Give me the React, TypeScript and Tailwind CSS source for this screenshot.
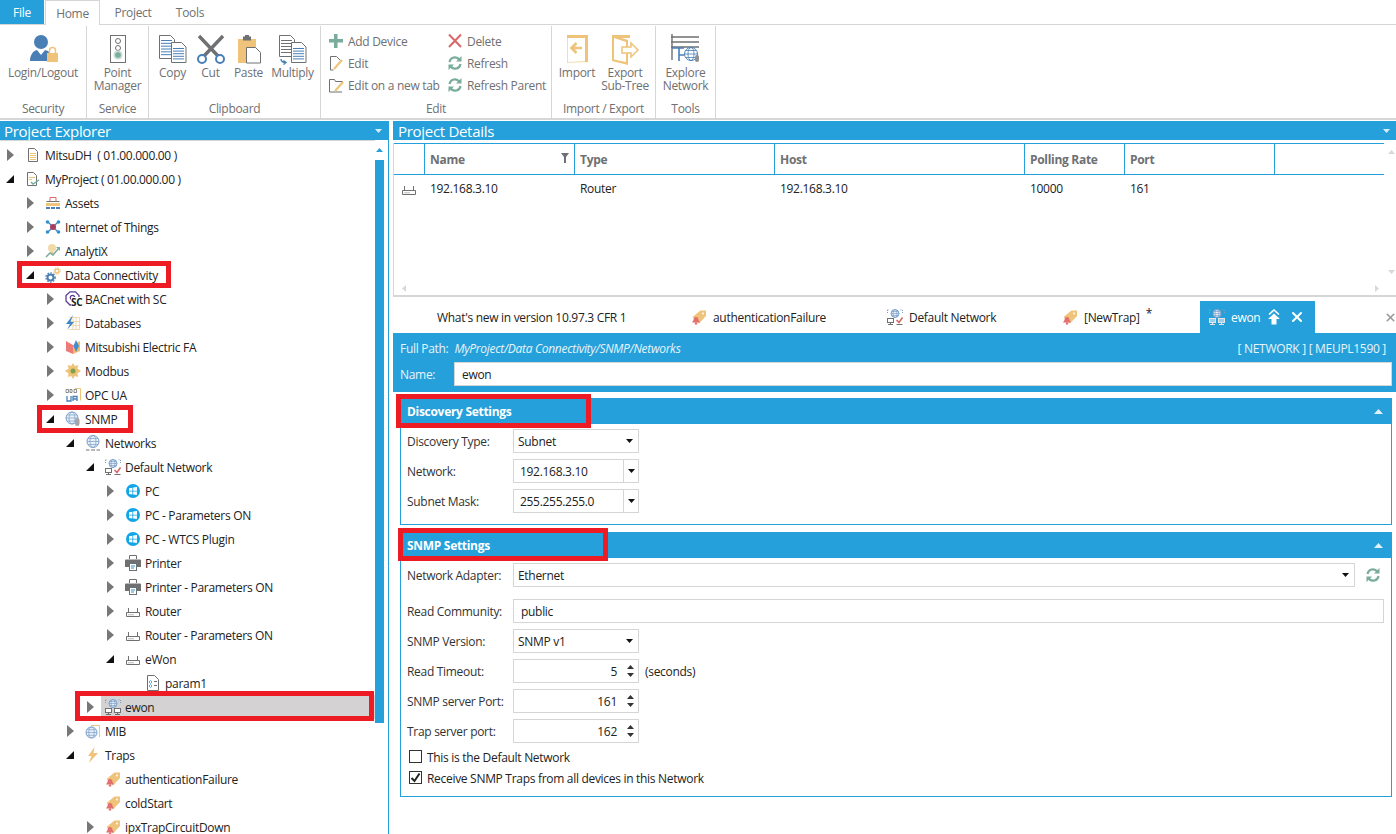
import type { ReactNode } from "react"
import { X } from "lucide-react"

const ICON_BLUE = "#4a7fb5"
const ICON_ORANGE = "#efc379"
const ICON_GRAY = "#6f7072"
const ICON_GREEN = "#79ac9b"
const ICON_RED = "#d9686a"

function Ico({ s = 16, v = 16, children }: { s?: number; v?: number; children: ReactNode }) {
  return (
    <svg width={s} height={s} viewBox={`0 0 ${v} ${v}`} fill="none" className="shrink-0">
      {children}
    </svg>
  )
}

// ribbon icons, 32 box
function UserLock() {
  return (
    <Ico s={32} v={32}>
      <circle cx="14" cy="9" r="7" fill={ICON_BLUE} />
      <path d="M3 28c0-6 3-10 7-11l4 5 4-5c2 .5 3 1 4 2v9H3z" fill={ICON_BLUE} />
      <rect x="20" y="20" width="11" height="9" fill={ICON_ORANGE} />
      <path d="M22.500 20v-2.500a3 3 0 0 1 6 0V20" stroke={ICON_ORANGE} strokeWidth="1.500" />
    </Ico>
  )
}
function TrafficLight() {
  return (
    <Ico s={32} v={32}>
      <rect x="8.500" y="2.500" width="15" height="27" stroke={ICON_GRAY} />
      <circle cx="16" cy="8" r="2.500" stroke={ICON_GRAY} />
      <circle cx="16" cy="15" r="2.500" stroke={ICON_GRAY} />
      <circle cx="16" cy="22" r="4.500" fill="#c5ddd4" />
      <circle cx="16" cy="22" r="2.800" fill={ICON_GREEN} />
    </Ico>
  )
}
function DocLines({ x, y, w, h, c, n }: { x: number; y: number; w: number; h: number; c: string; n: number }) {
  return (
    <>
      {Array.from({ length: n }).map((_, i) => (
        <line key={i} x1={x} x2={x + w} y1={y + (i * h) / n + 0.5} y2={y + (i * h) / n + 0.5} stroke={c} />
      ))}
    </>
  )
}
function CopyIcon() {
  return (
    <Ico s={32} v={32}>
      <path d="M2.500 2.500h11l4 4v19h-15z" stroke={ICON_GRAY} fill="white" />
      <DocLines x={4} y={7} w={11} h={17} c={ICON_BLUE} n={6} />
      <path d="M14.500 9.500h10l4.500 4.500v15.500H14.500z" stroke={ICON_GRAY} fill="white" />
      <DocLines x={16} y={15} w={11} h={13} c={ICON_BLUE} n={5} />
    </Ico>
  )
}
function MultiplyIcon() {
  return (
    <Ico s={32} v={32}>
      <path d="M2.500 2.500h11l4 4v17h-15z" stroke={ICON_GRAY} fill="white" />
      <DocLines x={4} y={7} w={11} h={15} c={ICON_GRAY} n={5} />
      <path d="M14.500 9.500h10l4.500 4.500v15.500H14.500z" stroke={ICON_GRAY} fill="white" />
      <DocLines x={16} y={15} w={11} h={13} c={ICON_BLUE} n={5} />
      <path d="M4 26c0 3 2 3.500 5 3.500M6.500 27.500 9 29.500l-2.500 2" stroke={ICON_BLUE} strokeWidth="1.400" />
    </Ico>
  )
}
function Scissors32() {
  return (
    <Ico s={32} v={32}>
      <path d="M4 3l19 20M28 3 9 23" stroke={ICON_GRAY} strokeWidth="3.400" />
      <circle cx="7" cy="26" r="4" stroke={ICON_BLUE} strokeWidth="2" fill="white" />
      <circle cx="25" cy="26" r="4" stroke={ICON_BLUE} strokeWidth="2" fill="white" />
    </Ico>
  )
}
function PasteIcon() {
  return (
    <Ico s={32} v={32}>
      <rect x="5" y="6" width="18" height="24" fill={ICON_ORANGE} />
      <rect x="10" y="3.500" width="8" height="4" fill={ICON_GRAY} />
      <rect x="12" y="2" width="4" height="2" fill={ICON_GRAY} />
      <path d="M13.500 14.500h9l5 5v10.500h-14z" stroke={ICON_GRAY} fill="white" />
    </Ico>
  )
}
function ImportIcon() {
  return (
    <Ico s={32} v={32}>
      <path d="M6 2h21v27l-21 1z" fill="#f6dcae" />
      <path d="M7 3h17v25L7 29z" fill="white" />
      <path d="M24 2h3v27h-3z" fill={ICON_ORANGE} />
      <path d="M6 2h21v3H6z" fill={ICON_ORANGE} />
      <path d="M21 15h-10M15.500 10 10.500 15l5 5" stroke={ICON_ORANGE} strokeWidth="2.600" />
    </Ico>
  )
}
function ExportIcon() {
  return (
    <Ico s={32} v={32}>
      <path d="M3 2h18v3H3z" fill={ICON_ORANGE} />
      <path d="M3 2l16 5v25L3 28z" fill={ICON_ORANGE} />
      <path d="M5 5l12 4v20L5 26.500z" fill="white" />
      <path d="M13 14h9v-4l7 7-7 7v-4h-9z" fill="white" stroke={ICON_ORANGE} strokeWidth="1.500" />
    </Ico>
  )
}
function ExploreIcon() {
  return (
    <Ico s={32} v={32}>
      <path d="M1 4h28M1 9h28M1 14h28" stroke={ICON_GRAY} strokeWidth="1.400" />
      <path d="M2 1v26" stroke={ICON_GRAY} strokeWidth="1.400" />
      <path d="M2 15h12M9 15v13M9 22h5" stroke={ICON_BLUE} strokeWidth="1.600" />
      <circle cx="21" cy="21" r="6.500" stroke={ICON_BLUE} fill="white" />
      <ellipse cx="21" cy="21" rx="3" ry="6.500" stroke={ICON_BLUE} strokeWidth=".8" />
      <path d="M14.500 21h13M16 17.500h10M16 24.500h10" stroke={ICON_BLUE} strokeWidth=".8" />
      <rect x="25" y="22" width="4" height="7" rx="2" fill="#8f9092" />
    </Ico>
  )
}

// small toolbar icons
function PlusIcon() {
  return (
    <Ico>
      <path d="M6 1h3.500v5H15v3.500H9.500V15H6V9.500H1V6h5z" fill={ICON_GREEN} />
    </Ico>
  )
}
function EditDoc() {
  return (
    <Ico>
      <path d="M2.500 15V1.500h6l4 4V7M2.500 15h3" stroke={ICON_GRAY} />
      <path d="M6 14l8-9" stroke={ICON_ORANGE} strokeWidth="2.200" />
    </Ico>
  )
}
function EditFolder() {
  return (
    <Ico>
      <path d="M1.500 15V2.500h5l1 2h7V7M1.500 15h12.500" stroke={ICON_GRAY} />
      <path d="M7 14l8-9" stroke={ICON_ORANGE} strokeWidth="2.200" />
    </Ico>
  )
}
function RedX() {
  return (
    <Ico>
      <path d="M2 1.500 14 14M14 1.500 2 14" stroke={ICON_RED} strokeWidth="2" />
    </Ico>
  )
}
function RefreshIcon() {
  return (
    <Ico>
      <path d="M2.500 7a5.500 5.500 0 0 1 9.800-2.500M13.500 9a5.500 5.500 0 0 1-9.800 2.500" stroke={ICON_GREEN} strokeWidth="2.200" />
      <path d="M14.500 1v5.500H9zM1.500 15V9.500H7z" fill={ICON_GREEN} />
    </Ico>
  )
}

// tree icons
function FileText() {
  return (
    <Ico>
      <path d="M3.500 1.500h6l3 3v10h-9z" stroke={ICON_GRAY} fill="white" />
      <path d="M5 6.500h6M5 8.500h6M5 10.500h6M5 12.500h6" stroke={ICON_ORANGE} />
    </Ico>
  )
}
function ProjectIcon() {
  return (
    <Ico>
      <path d="M2.500 1.500h6l3 3v10h-9z" stroke={ICON_GRAY} fill="white" />
      <path d="M4 6.500h6M4 8.500h3" stroke={ICON_ORANGE} />
      <path d="M6 11l2 2 6-4" stroke={ICON_GREEN} strokeWidth="1.500" />
    </Ico>
  )
}
function AssetsIcon() {
  return (
    <Ico>
      <path d="M5 6V2.500h6V6" stroke={ICON_RED} />
      <path d="M1.500 6.500h13" stroke={ICON_GRAY} />
      <rect x="1" y="8" width="14" height="3" fill={ICON_ORANGE} />
      <rect x="1" y="12" width="4" height="2" fill={ICON_BLUE} />
      <rect x="6" y="12" width="4" height="2" fill={ICON_BLUE} />
      <rect x="11" y="12" width="4" height="2" fill={ICON_BLUE} />
    </Ico>
  )
}
function IotIcon() {
  return (
    <Ico>
      <path d="M3 3l10 10M13 3 3 13" stroke={ICON_BLUE} strokeWidth="1.200" />
      <circle cx="8" cy="8" r="3" fill="#a83d62" />
      <circle cx="2.500" cy="3" r="1.800" fill="#2f8fd0" />
      <circle cx="13.500" cy="3" r="1.800" fill="#2f8fd0" />
      <circle cx="2.500" cy="13" r="1.800" fill="#2f8fd0" />
      <circle cx="13.500" cy="13" r="1.800" fill="#2f8fd0" />
    </Ico>
  )
}
function AnalytixIcon() {
  return (
    <Ico>
      <circle cx="7" cy="5" r="4" fill="#f2d9a8" />
      <rect x="5.500" y="9" width="3" height="2" fill={ICON_ORANGE} />
      <path d="M1 14l4-4 3 2 6-7" stroke={ICON_GREEN} strokeWidth="1.500" />
      <path d="M11 4h4v4z" fill={ICON_GREEN} />
    </Ico>
  )
}
function GearsIcon() {
  return (
    <Ico>
      <circle cx="5.500" cy="10.500" r="3" stroke={ICON_BLUE} strokeWidth="2" />
      <circle cx="5.500" cy="10.500" r="4.600" stroke={ICON_BLUE} strokeDasharray="1.500 1.500" strokeWidth="1.400" />
      <circle cx="12" cy="4" r="2" stroke={ICON_ORANGE} strokeWidth="1.400" />
      <circle cx="12" cy="4" r="3.300" stroke={ICON_ORANGE} strokeDasharray="1.300 1.300" />
    </Ico>
  )
}
function BacnetIcon() {
  return (
    <span className="relative inline-block h-4 w-4 shrink-0">
      <Ico>
        <path d="M5 .8h5.500L14 4.500V9l-3 5H5L1 10V4.500z" stroke="#5c3a94" strokeWidth="1.300" />
        <circle cx="7.500" cy="6.500" r="2.200" stroke="#5c3a94" strokeWidth="1.300" />
      </Ico>
      <span className="absolute left-[6px] top-[6px] bg-white text-[10px] leading-[10px] font-bold text-[#222]">SC</span>
    </span>
  )
}
function DatabaseIcon() {
  return (
    <Ico>
      <path d="M4.500 2.500h10v12h-10M8 2.500v12M11 2.500v12M4.500 6.500h10M4.500 10.500h10" stroke="#eed9ae" />
      <path d="M8 0 1 9h4l-3 6 7-8H5.500z" fill="#3f86c8" />
    </Ico>
  )
}
function MitsubishiIcon() {
  return (
    <Ico>
      <path d="M1 2l7 4v9l-7-3z" fill="#ee7a78" />
      <path d="M15 2 8 6v9l7-3z" fill="#f2bc6b" />
      <path d="M11 1l3 6-3 6-2.500-6z" fill="#3f8fd0" />
    </Ico>
  )
}
function ModbusIcon() {
  return (
    <Ico>
      <path d="M8 0l1.800 3 3.500-1-.9 3.500L16 8l-3.600 2.500.9 3.500-3.500-1L8 16l-1.800-3-3.500 1 .9-3.500L0 8l3.600-2.500L2.700 2l3.500 1z" fill={ICON_ORANGE} />
      <circle cx="8" cy="8" r="2.500" fill="#7fa24a" />
    </Ico>
  )
}
function OpcIcon() {
  return (
    <Ico>
      <path d="M10 1.500h5.500v12" stroke={ICON_ORANGE} />
      <path d="M1 2.500h2.500v3H1zM5 2.500h2v3H5zM9 2.500h2.500v3H9z" stroke={ICON_GRAY} strokeWidth=".8" />
      <path d="M2 9v5h4V9M8 14V9.500h4V14M8 12h4" stroke={ICON_BLUE} strokeWidth="1.300" />
    </Ico>
  )
}
function Globe({ cx, cy, r }: { cx: number; cy: number; r: number }) {
  return (
    <>
      <circle cx={cx} cy={cy} r={r} stroke="#7a9fc8" fill="#e9f0f8" />
      <ellipse cx={cx} cy={cy} rx={r / 2} ry={r} stroke="#7a9fc8" strokeWidth=".7" />
      <path d={`M${cx - r} ${cy}h${2 * r}M${cx - r + 1} ${cy - r / 2}h${2 * r - 2}M${cx - r + 1} ${cy + r / 2}h${2 * r - 2}`} stroke="#7a9fc8" strokeWidth=".7" />
    </>
  )
}
function SnmpIcon() {
  return (
    <Ico>
      <Globe cx={7} cy={7} r={6} />
      <rect x="10" y="7" width="4.500" height="8" rx="2.200" fill="#a5a6a8" />
    </Ico>
  )
}
function NetworksIcon() {
  return (
    <Ico>
      <Globe cx={8} cy={6.500} r={6} />
      <path d="M1 15h3.500M6 15h4M11.500 15H15" stroke={ICON_GRAY} />
    </Ico>
  )
}
function NetworkIcon({ check, light }: { check?: boolean; light?: boolean }) {
  const c = light ? "#e6e6e6" : ICON_GRAY
  return (
    <Ico>
      <path d="M.5 1v4M15.500 1v4M.5.800h2M13.500.800h2" stroke="#7a9fc8" strokeDasharray="1 1" />
      <Globe cx={8} cy={4.500} r={4} />
      <rect x=".5" y="9.500" width="6" height="4" stroke={c} fill={light ? "#9ad0ee" : "white"} />
      <path d="M1 15.500h5M3.500 13.500v2" stroke={c} />
      {check ? (
        <path d="M9.500 11l2.500 2.500 3.500-5" stroke={ICON_RED} strokeWidth="1.600" />
      ) : (
        <>
          <rect x="9.500" y="9.500" width="6" height="4" stroke={c} fill={light ? "#9ad0ee" : "white"} />
          <path d="M10 15.500h5M12.500 13.500v2" stroke={c} />
        </>
      )}
      {check && <path d="M9.500 15.500h6" stroke={ICON_GRAY} />}
    </Ico>
  )
}
function WindowsIcon() {
  return (
    <Ico>
      <circle cx="8" cy="8" r="7" fill="#12a5e8" />
      <path d="M4 5.200 7.400 4.700v3H4zM8.200 4.600 12 4v3.700H8.200zM4 8.500h3.400v2.900L4 10.900zM8.200 8.500H12V12l-3.800-.6z" fill="white" />
    </Ico>
  )
}
function PrinterIcon() {
  return (
    <Ico>
      <path d="M4.500 4V.5h7V4" stroke={ICON_GRAY} />
      <path d="M0 5.500a1 1 0 0 1 1-1h14a1 1 0 0 1 1 1V12h-4V9H4v3H0z" fill={ICON_GRAY} />
      <rect x="4.500" y="8.500" width="7" height="7" stroke={ICON_GRAY} fill="white" />
      <path d="M6 11h4" stroke="#2f8fd0" />
      <path d="M6 13h3" stroke="#2f8fd0" />
    </Ico>
  )
}
function RouterIcon() {
  return (
    <Ico>
      <path d="M1.500 9.500h13v4h-13zM3.500 9V5M12.500 9V5" stroke={ICON_GRAY} />
      <path d="M3.500 11.800h6" stroke={ICON_GRAY} strokeDasharray="1 1" />
    </Ico>
  )
}
function ParamIcon() {
  return (
    <Ico>
      <path d="M2.500.5h7l4 4v11h-11z" stroke={ICON_GRAY} fill="white" />
      <path d="M9 6.500h3M9 10.500h3" stroke={ICON_GRAY} />
      <path d="M5.500 5.500l1.500 1.500-1.500 1.500L4 7zM5.500 9.500l1.500 1.500-1.500 1.500L4 11z" stroke="#2f8fd0" strokeWidth=".8" />
    </Ico>
  )
}
function MibIcon() {
  return (
    <Ico>
      <path d="M6 2.500h8.500V14" stroke={ICON_ORANGE} />
      <Globe cx={6.500} cy={9.500} r={5.500} />
    </Ico>
  )
}
function BoltIcon() {
  return (
    <Ico>
      <path d="M9.500 0 3 9h3.500L4 16l9-10H8.500z" fill={ICON_ORANGE} />
    </Ico>
  )
}
function TrapIcon() {
  return (
    <Ico>
      <path d="M1.500 8 9.500 1.500h5.500V7L8 14.500z" fill={ICON_ORANGE} />
      <circle cx="12" cy="4.500" r="1" fill="white" />
      <path d="M5 8c1.500 0 2.500 1.200 2.500 3l1.500 2.500H1L2.500 11c0-1.800 1-3 2.500-3z" fill="#e2706e" />
      <circle cx="5" cy="14.500" r="1.200" fill="#e2706e" />
    </Ico>
  )
}
function TabUpIcon() {
  return (
    <svg width="14" height="16" viewBox="0 0 14 16" className="ml-px shrink-0">
      <path d="M2 5.500 7 1l5 4.500" stroke="white" strokeWidth="1.600" fill="none" />
      <path d="M7 4.500 13 10H9.500v5.500h-5V10H1z" fill="white" />
    </svg>
  )
}

type Node = { label: string; level: number; icon: ReactNode; open?: boolean; leaf?: boolean; selected?: boolean }

const tree: Node[] = [
  { label: "MitsuDH  ( 01.00.000.00 )", level: 0, icon: <FileText /> },
  { label: "MyProject ( 01.00.000.00 )", level: 0, icon: <ProjectIcon />, open: true },
  { label: "Assets", level: 1, icon: <AssetsIcon /> },
  { label: "Internet of Things", level: 1, icon: <IotIcon /> },
  { label: "AnalytiX", level: 1, icon: <AnalytixIcon /> },
  { label: "Data Connectivity", level: 1, icon: <GearsIcon />, open: true },
  { label: "BACnet with SC", level: 2, icon: <BacnetIcon /> },
  { label: "Databases", level: 2, icon: <DatabaseIcon /> },
  { label: "Mitsubishi Electric FA", level: 2, icon: <MitsubishiIcon /> },
  { label: "Modbus", level: 2, icon: <ModbusIcon /> },
  { label: "OPC UA", level: 2, icon: <OpcIcon /> },
  { label: "SNMP", level: 2, icon: <SnmpIcon />, open: true },
  { label: "Networks", level: 3, icon: <NetworksIcon />, open: true },
  { label: "Default Network", level: 4, icon: <NetworkIcon check />, open: true },
  { label: "PC", level: 5, icon: <WindowsIcon /> },
  { label: "PC - Parameters ON", level: 5, icon: <WindowsIcon /> },
  { label: "PC - WTCS Plugin", level: 5, icon: <WindowsIcon /> },
  { label: "Printer", level: 5, icon: <PrinterIcon /> },
  { label: "Printer - Parameters ON", level: 5, icon: <PrinterIcon /> },
  { label: "Router", level: 5, icon: <RouterIcon /> },
  { label: "Router - Parameters ON", level: 5, icon: <RouterIcon /> },
  { label: "eWon", level: 5, icon: <RouterIcon />, open: true },
  { label: "param1", level: 6, icon: <ParamIcon />, leaf: true },
  { label: "ewon", level: 4, icon: <NetworkIcon />, selected: true },
  { label: "MIB", level: 3, icon: <MibIcon /> },
  { label: "Traps", level: 3, icon: <BoltIcon />, open: true },
  { label: "authenticationFailure", level: 4, icon: <TrapIcon />, leaf: true },
  { label: "coldStart", level: 4, icon: <TrapIcon />, leaf: true },
  { label: "ipxTrapCircuitDown", level: 4, icon: <TrapIcon /> },
]

const indent = ["pl-[3px]", "pl-[23px]", "pl-[43px]", "pl-[63px]", "pl-[83px]", "pl-[103px]", "pl-[123px]"]

function TreeRow({ node }: { node: Node }) {
  return (
    <div className={`flex h-6 items-center ${indent[node.level]}`}>
      <div className="flex w-[18px] shrink-0 pl-[3px]">
        {node.leaf ? null : node.open ? (
          <svg width="8" height="8" viewBox="0 0 8 8">
            <path d="M8 0v8H0z" fill="#111" />
          </svg>
        ) : (
          <svg width="8" height="12" viewBox="0 0 8 12">
            <path d="M1 0l7 6-7 6z" fill="#777" />
          </svg>
        )}
      </div>
      <div className={`flex h-full flex-1 items-center gap-1 pl-1 ${node.selected ? "bg-[#d4d2d3]" : ""}`}>
        {node.icon}
        <span className="mt-[2px] whitespace-pre">{node.label}</span>
      </div>
    </div>
  )
}

function RibbonBtn({ icon, label, w }: { icon: ReactNode; label: ReactNode; w: string }) {
  return (
    <div className={`flex flex-col items-center ${w}`}>
      <div className="flex h-8 items-center justify-center">{icon}</div>
      <div className="mt-px whitespace-nowrap text-center leading-[13px]">{label}</div>
    </div>
  )
}

function Group({ label, w, children }: { label: string; w: string; children: ReactNode }) {
  return (
    <div className={`flex h-[93px] flex-col border-r border-[#d6d6d6] ${w}`}>
      <div className="flex flex-1 justify-center pt-[7px]">{children}</div>
      <div className="pb-[2px] text-center leading-[16px]">{label}</div>
    </div>
  )
}

function SmallBtn({ icon, label }: { icon: ReactNode; label: string }) {
  return (
    <div className="flex h-[22px] items-center gap-[4px] whitespace-nowrap">
      {icon}
      <span className="mt-[2px]">{label}</span>
    </div>
  )
}

function Caret() {
  return (
    <svg width="7" height="4" viewBox="0 0 7 4" className="shrink-0">
      <path d="M0 0h7L3.500 4z" fill="#111" />
    </svg>
  )
}

function Field({ label, children }: { label: string; children: ReactNode }) {
  return (
    <div className="flex items-center">
      <div className="mt-[2px] w-[112px] pl-[6px] text-[#333]">{label}</div>
      {children}
    </div>
  )
}

function Select({ value, wide }: { value: string; wide?: boolean }) {
  return (
    <div className={`flex h-6 items-center justify-between border border-[#d5d5d5] pl-[4px] pr-[5px] ${wide ? "w-[842px]" : "w-[126px]"}`}>
      <span className="mt-[2px]">{value}</span>
      <Caret />
    </div>
  )
}

function Combo({ value }: { value: string }) {
  return (
    <div className="flex h-6 w-[126px] items-center border border-[#d5d5d5]">
      <span className="mt-[2px] w-[109px] pl-[6px]">{value}</span>
      <div className="flex h-full flex-1 items-center justify-center border-l border-[#d5d5d5]">
        <Caret />
      </div>
    </div>
  )
}

function Spinner({ value }: { value: string }) {
  return (
    <div className="flex h-6 w-[126px] items-center justify-end gap-[10px] border border-[#d5d5d5] pr-[4px]">
      <span className="mt-[2px]">{value}</span>
      <svg width="7" height="12" viewBox="0 0 7 12" className="shrink-0">
        <path d="M3.500 0 7 4H0zM0 8h7L3.500 12z" fill="#333" />
      </svg>
    </div>
  )
}

function PanelHead({ title }: { title: string }) {
  return (
    <div className="flex h-[26px] items-center justify-between bg-[#26a0da] pl-[6px] pr-[8px] font-bold text-white">
      <span className="mt-[2px]">{title}</span>
      <svg width="9" height="5" viewBox="0 0 9 5">
        <path d="M4.500 0 9 5H0z" fill="#dff1fb" />
      </svg>
    </div>
  )
}

function HeadBar({ title, className }: { title: string; className: string }) {
  return (
    <div className={`flex h-[19px] items-center justify-between bg-[#26a0da] pr-[7px] text-white ${className}`}>
      <span className="mt-[2px] text-[15px] leading-[17px]">{title}</span>
      <svg width="7" height="4" viewBox="0 0 7 4">
        <path d="M0 0h7L3.500 4z" fill="#d8eefa" />
      </svg>
    </div>
  )
}

function RedBox({ className }: { className: string }) {
  return <div className={`pointer-events-none absolute border-[#ed1c24] ${className}`} />
}

function ColHead({ label, w, filter }: { label: string; w: string; filter?: boolean }) {
  return (
    <div className={`flex h-full items-center justify-between border-l border-[#26a0da] px-[5px] font-bold text-[#6f7072] ${w}`}>
      <span className="mt-[2px]">{label}</span>
      {filter && (
        <svg width="8" height="10" viewBox="0 0 8 10" className="mb-[2px]">
          <path d="M0 0h8L5 4v6H3V4z" fill="#6f7072" />
        </svg>
      )}
    </div>
  )
}

function DocTab({ icon, label, w, star }: { icon?: ReactNode; label: string; w: string; star?: boolean }) {
  return (
    <div className={`flex h-full items-center gap-[6px] whitespace-nowrap text-[#222] ${w}`}>
      {icon}
      <span className="mt-[2px]">{label}</span>
      {star && <span className="-mt-[6px] text-[#223]">*</span>}
    </div>
  )
}

export default function App() {
  return (
    <div className="relative h-[834px] w-[1396px] overflow-hidden bg-white font-['Open_Sans',sans-serif] text-[12px] tracking-[-0.3px] text-[#222]">
      {/* ribbon tabs */}
      <div className="flex h-[25px] items-end border-b border-[#d6d6d6] text-[#6f7072]">
        <div className="flex h-6 w-[44px] items-center justify-center self-start bg-[#26a0da] pt-[2px] text-white">File</div>
        <div className="relative top-px ml-px flex h-[25px] w-[55px] items-center justify-center border-x border-t border-[#d6d6d6] bg-white pt-[2px]">Home</div>
        <div className="flex h-6 w-[66px] items-center justify-center pt-[2px]">Project</div>
        <div className="flex h-6 w-[48px] items-center justify-center pt-[2px]">Tools</div>
      </div>

      {/* ribbon */}
      <div className="flex h-[95px] border-b-2 border-[#d6d6d6] pt-px text-[#6f7072]">
        <Group label="Security" w="w-[87px]">
          <RibbonBtn w="w-[87px]" icon={<UserLock />} label="Login/Logout" />
        </Group>
        <Group label="Service" w="w-[62px]">
          <RibbonBtn w="w-[62px]" icon={<TrafficLight />} label={<>Point<br />Manager</>} />
        </Group>
        <Group label="Clipboard" w="w-[172px]">
          <div className="flex">
            <RibbonBtn w="w-[40px]" icon={<CopyIcon />} label="Copy" />
            <RibbonBtn w="w-[36px]" icon={<Scissors32 />} label="Cut" />
            <RibbonBtn w="w-[40px]" icon={<PasteIcon />} label="Paste" />
            <RibbonBtn w="w-[48px]" icon={<MultiplyIcon />} label="Multiply" />
          </div>
        </Group>
        <Group label="Edit" w="w-[231px]">
          <div className="-mt-[3px] flex w-full pl-[7px]">
            <div className="w-[119px]">
              <SmallBtn icon={<PlusIcon />} label="Add Device" />
              <SmallBtn icon={<EditDoc />} label="Edit" />
              <SmallBtn icon={<EditFolder />} label="Edit on a new tab" />
            </div>
            <div>
              <SmallBtn icon={<RedX />} label="Delete" />
              <SmallBtn icon={<RefreshIcon />} label="Refresh" />
              <SmallBtn icon={<RefreshIcon />} label="Refresh Parent" />
            </div>
          </div>
        </Group>
        <Group label="Import / Export" w="w-[104px]">
          <div className="flex w-full">
            <RibbonBtn w="w-[50px]" icon={<ImportIcon />} label="Import" />
            <RibbonBtn w="w-[46px]" icon={<ExportIcon />} label={<>Export<br />Sub-Tree</>} />
          </div>
        </Group>
        <Group label="Tools" w="w-[60px]">
          <RibbonBtn w="w-[59px]" icon={<ExploreIcon />} label={<>Explore<br />Network</>} />
        </Group>
      </div>

      {/* body */}
      <div className="mt-px flex h-[713px]">
        {/* project explorer */}
        <div className="w-[389px] shrink-0 border-r border-[#26a0da]">
          <HeadBar title="Project Explorer" className="-mr-px pl-[4px]" />
          <div className="flex h-[694px]">
            <div className="w-[375px] shrink-0 overflow-hidden border-t border-[#d6d6d6] pt-[2px] text-[#222]">
              {tree.map((n) => (
                <TreeRow key={n.label} node={n} />
              ))}
            </div>
            <div className="flex w-[9px] flex-col items-center pt-[8px]">
              <svg width="7" height="4" viewBox="0 0 7 4">
                <path d="M3.500 0 7 4H0z" fill="#26a0da" />
              </svg>
              <div className="mt-[8px] h-[563px] w-full bg-[#26a0da]" />
            </div>
          </div>
        </div>

        {/* right side */}
        <div className="ml-[4px] flex-1">
          <HeadBar title="Project Details" className="pl-[5px]" />
          {/* grid */}
          <div className="relative mt-[3px] h-[154px] border-b-2 border-l border-[#d6d6d6]">
            <div className="flex h-[32px] w-[990px] items-center border-y border-[#26a0da]">
              <div className="w-[30px]" />
              <ColHead label="Name" w="w-[150px]" filter />
              <ColHead label="Type" w="w-[200px]" />
              <ColHead label="Host" w="w-[250px]" />
              <ColHead label="Polling Rate" w="w-[100px]" />
              <ColHead label="Port" w="w-[150px]" />
              <div className="h-full flex-1 border-l border-[#26a0da]" />
            </div>
            <div className="flex h-[28px] w-[990px] items-center">
              <div className="flex w-[30px] justify-center">
                <RouterIcon />
              </div>
              <div className="w-[150px] pl-[6px]">192.168.3.10</div>
              <div className="w-[200px] pl-[6px]">Router</div>
              <div className="w-[250px] pl-[6px]">192.168.3.10</div>
              <div className="w-[100px] pl-[6px]">10000</div>
              <div className="pl-[6px]">161</div>
            </div>
            <svg width="7" height="4" viewBox="0 0 7 4" className="absolute right-[2px] top-[7px]">
              <path d="M3.500 0 7 4H0z" fill="#d8d8d8" />
            </svg>
            <svg width="7" height="4" viewBox="0 0 7 4" className="absolute right-[2px] top-[127px]">
              <path d="M0 0h7L3.500 4z" fill="#d8d8d8" />
            </svg>
            <svg width="4" height="7" viewBox="0 0 4 7" className="absolute left-[8px] top-[142px]">
              <path d="M4 0v7L0 3.500z" fill="#d8d8d8" />
            </svg>
            <svg width="4" height="7" viewBox="0 0 4 7" className="absolute right-[18px] top-[142px]">
              <path d="M0 0v7l4-3.500z" fill="#d8d8d8" />
            </svg>
          </div>

          {/* document tabs */}
          <div className="flex h-[36px] items-end">
            <div className="flex h-[32px] items-center">
              <DocTab label="What's new in version 10.97.3 CFR 1" w="w-[298px] pl-[44px]" />
              <DocTab icon={<TrapIcon />} label="authenticationFailure" w="w-[196px]" />
              <DocTab icon={<NetworkIcon check />} label="Default Network" w="w-[175px]" />
              <DocTab icon={<TrapIcon />} label="[NewTrap]" w="w-[138px]" star />
              <div className="flex h-full w-[115px] items-center gap-[6px] bg-[#26a0da] pl-[9px] text-white">
                <NetworkIcon light />
                <span className="mt-[2px]">ewon</span>
                <TabUpIcon />
                <X size={16} strokeWidth={3} color="white" className="ml-[2px]" />
              </div>
              <X size={13} strokeWidth={3} color="#9a9a9a" className="ml-[69px]" />
            </div>
          </div>

          {/* path and name */}
          <div className="h-[59px] bg-[#26a0da] text-white">
            <div className="flex h-[29px] items-center justify-between pl-[7px] pr-[11px] pt-[3px]">
              <div className="flex items-center gap-[6px]">
                <span className="text-[#e6f4fb]">Full Path:</span>
                <span className="italic text-[#e6f4fb]">MyProject/Data Connectivity/SNMP/Networks</span>
              </div>
              <span className="text-[#e6f4fb]">[ NETWORK ] [ MEUPL1590 ]</span>
            </div>
            <div className="flex items-center pl-[7px] pr-[5px]">
              <span className="mt-[2px] w-[54px] text-[#e6f4fb]">Name:</span>
              <div className="flex h-6 flex-1 items-center border border-[#d5d5d5] bg-white pl-[7px] pt-[2px] text-[#222]">ewon</div>
            </div>
          </div>

          {/* discovery settings */}
          <div className="ml-[7px] mr-[5px] mt-[6px] h-[127px] border-x border-b border-[#26a0da]">
            <PanelHead title="Discovery Settings" />
            <div className="flex flex-col gap-[6px] pt-[5px]">
              <Field label="Discovery Type:">
                <Select value="Subnet" />
              </Field>
              <Field label="Network:">
                <Combo value="192.168.3.10" />
              </Field>
              <Field label="Subnet Mask:">
                <Combo value="255.255.255.0" />
              </Field>
            </div>
          </div>

          {/* snmp settings */}
          <div className="ml-[7px] mr-[5px] mt-[7px] h-[265px] border-x border-b border-[#26a0da]">
            <PanelHead title="SNMP Settings" />
            <div className="flex flex-col pt-[5px]">
              <Field label="Network Adapter:">
                <Select value="Ethernet" wide />
                <div className="ml-[10px]">
                  <RefreshIcon />
                </div>
              </Field>
              <div className="mt-[12px] flex flex-col gap-[6px]">
                <Field label="Read Community:">
                  <div className="flex h-6 w-[871px] items-center border border-[#d5d5d5] pl-[7px] pt-[2px]">public</div>
                </Field>
                <Field label="SNMP Version:">
                  <Select value="SNMP v1" />
                </Field>
                <Field label="Read Timeout:">
                  <Spinner value="5" />
                  <span className="ml-[6px] mt-[2px]">(seconds)</span>
                </Field>
                <Field label="SNMP server Port:">
                  <Spinner value="161" />
                </Field>
                <Field label="Trap server port:">
                  <Spinner value="162" />
                </Field>
              </div>
              <div className="mt-[3px] flex h-[21px] items-center gap-[5px] pl-[8px]">
                <div className="h-[13px] w-[13px] border border-[#333]" />
                <span className="mt-[2px]">This is the Default Network</span>
              </div>
              <div className="flex h-[21px] items-center gap-[5px] pl-[8px]">
                <div className="flex h-[13px] w-[13px] items-center justify-center border border-[#333]">
                  <svg width="11" height="11" viewBox="0 0 11 11">
                    <path d="M1.500 6l3 3 5-7.500" stroke="#222" strokeWidth="2" fill="none" />
                  </svg>
                </div>
                <span className="mt-[2px]">Receive SNMP Traps from all devices in this Network</span>
              </div>
            </div>
          </div>
        </div>
      </div>

      {/* red annotations */}
      <RedBox className="left-[17px] top-[261px] h-[27px] w-[154px] border-[5px]" />
      <RedBox className="left-[37px] top-[405px] h-[28px] w-[96px] border-[5px]" />
      <RedBox className="left-[75px] top-[691px] h-[30px] w-[299px] border-[5px]" />
      <RedBox className="left-[396px] top-[394px] h-[34px] w-[195px] border-[5px]" />
      <RedBox className="left-[398px] top-[528px] h-[33px] w-[210px] border-[5px]" />
    </div>
  )
}
